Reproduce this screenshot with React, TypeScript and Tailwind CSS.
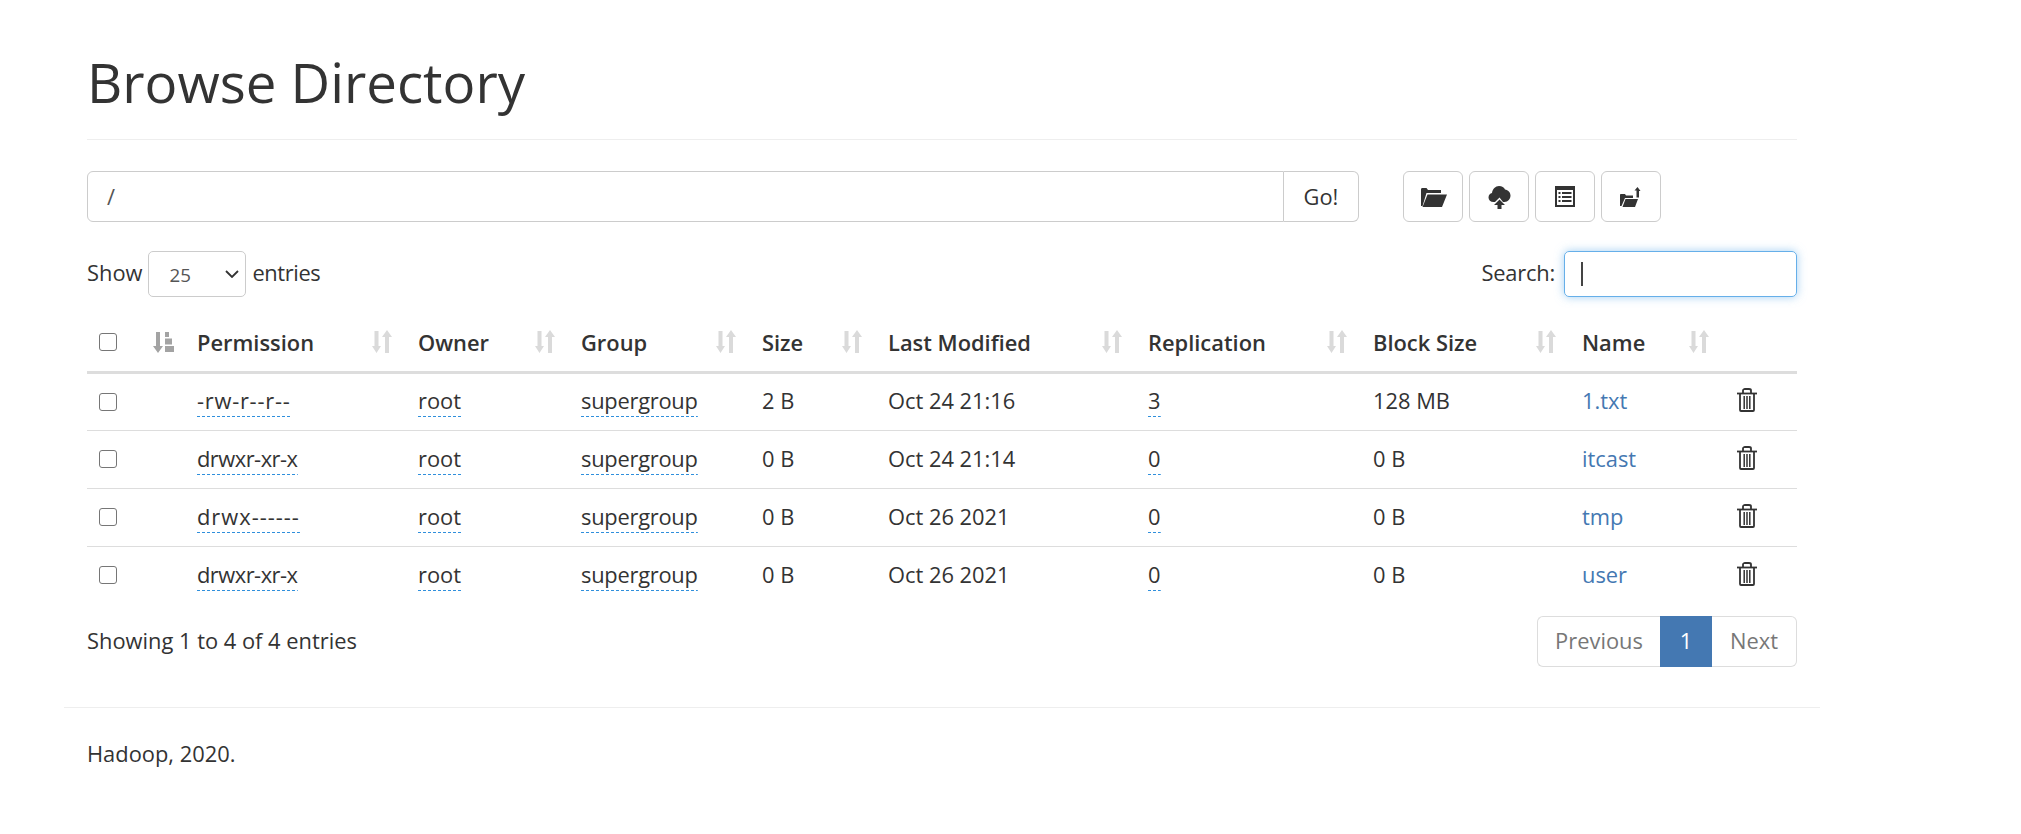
const Sort = () => (
  <svg width="20" height="24" viewBox="0 0 20 24" className="shrink-0 fill-[#dadada]">
    <path d="M2.500 1h4v15H9L4.500 23 0 16h2.500z" />
    <path d="M15 0 20 7h-3v16h-4V7h-3z" />
  </svg>
);

const SortActive = () => (
  <svg width="21" height="21" viewBox="0 0 21 21" className="shrink-0 fill-[#a3a3a3]">
    <path d="M3 0h4v14h3L5 21 0 14h3z" />
    <path d="M12 0h4v5h-4zM12 6.500h7v6h-7zM12 14h9v6h-9z" />
  </svg>
);

const Trash = () => (
  <svg width="20" height="24" viewBox="0 0 20 24" className="fill-none stroke-[#333]" strokeWidth="1.800">
    <path d="M0 5.500h20" />
    <path d="M6 5V2.500C6 1.500 7 1 8 1h4c1 0 2 .5 2 1.500V5" />
    <path d="M3 6v16c0 .6.500 1 1 1h12c.5 0 1-.4 1-1V6" />
    <path d="M7.200 8v13M10 8v13M12.800 8v13" strokeWidth="1.500" />
  </svg>
);

const FolderOpen = () => (
  <svg width="27" height="20" viewBox="0 0 27 20" className="fill-[#333]">
    <path d="M1 2.500C1 1.500 1.500 1 2.500 1h4L8 3h13v3H6.500L2.500 19H1z" />
    <path d="M7.500 7.500H27L22 20H2.500z" />
  </svg>
);

const CloudUpload = () => (
  <svg width="23" height="24" viewBox="0 0 22 24" className="fill-[#333]">
    <path d="M5 17c-3 0-5-2-5-4.500C0 10 1.500 8.500 3.500 8 4 4 7 1 10.500 1c3 0 5 1.500 6 3.500 3 .3 5.500 3 5.500 6 0 3.500-2.500 6.500-6 6.500h-1.500L11 12.500 6.500 17z" />
    <path d="M11 14.500 16.500 20H13v4.500H9V20H5.500z" />
  </svg>
);

const ListAlt = () => (
  <svg width="20" height="21" viewBox="0 0 20 21">
    <rect x="0" y="0" width="20" height="21" className="fill-[#333]" />
    <rect x="2" y="4" width="16" height="15" className="fill-white" />
    <path d="M3.500 6h2v2h-2zM7 6h9.500v2H7zM3.500 10h2v2h-2zM7 10h9.500v2H7zM3.500 14h2v2h-2zM7 14h9.500v2H7z" className="fill-[#333]" />
  </svg>
);

const FolderUp = () => (
  <svg width="22" height="20" viewBox="0 0 22 20" className="fill-[#333]">
    <path d="M0 8c0-.7.500-1 1-1h4l1 1.500h7V11H5L1.500 19H0z" />
    <path d="M5.500 12H18l-3 8H2.500z" />
    <path d="M17.500 0 20.500 4H19v6.500h-2.500V3.500h-2z" />
  </svg>
);

const Dashed = ({ children, className }: { children: string; className?: string }) => (
  <span className={`pb-[2px] bg-[repeating-linear-gradient(90deg,#2f8fdc_0_3px,transparent_3px_5px)] bg-bottom bg-no-repeat bg-[length:100%_1px] ${className ?? ""}`}>{children}</span>
);

const rows = [
  ["-rw-r--r--", "2 B", "Oct 24 21:16", "3", "128 MB", "1.txt", "tracking-[0.75px]"],
  ["drwxr-xr-x", "0 B", "Oct 24 21:14", "0", "0 B", "itcast", "tracking-[-0.5px]"],
  ["drwx------", "0 B", "Oct 26 2021", "0", "0 B", "tmp", "tracking-[1px]"],
  ["drwxr-xr-x", "0 B", "Oct 26 2021", "0", "0 B", "user", "tracking-[-0.5px]"],
];

const heads = ["Permission", "Owner", "Group", "Size", "Last Modified", "Replication", "Block Size", "Name"];

const Check = () => (
  <span className="block w-[18px] h-[18px] rounded-[3px] border-[1.5px] border-[#767676] bg-white" />
);

const IconBtn = ({ children }: { children: React.ReactNode }) => (
  <button className="w-[60px] h-[51px] flex items-center justify-center bg-white border border-[#ccc] rounded-[6px]">
    {children}
  </button>
);

export default function App() {
  return (
    <div className="min-h-[834px] bg-white text-[#333] text-[21.875px] leading-[31px] font-['Open_Sans','Noto_Sans',sans-serif] w-[1756px] ml-[64px]">
      <div className="px-[23px]">
        <div className="pt-[52px] pb-[27px] border-b border-[#eee]">
          <h1 className="text-[54.6px] leading-[60px] font-normal">Browse Directory</h1>
        </div>
        <div className="mt-[31px] flex">
          <div className="w-[1272px] h-[51px] flex">
            <div className="flex-1 border border-[#ccc] rounded-l-[6px] pl-[19px] flex items-center text-[#555]">/</div>
            <div className="w-[75px] border border-l-0 border-[#ccc] rounded-r-[6px] flex items-center justify-center">Go!</div>
          </div>
          <div className="ml-[44px] flex gap-[6px]">
            <IconBtn><FolderOpen /></IconBtn>
            <IconBtn><CloudUpload /></IconBtn>
            <IconBtn><ListAlt /></IconBtn>
            <IconBtn><FolderUp /></IconBtn>
          </div>
        </div>
        <div className="mt-[29px]">
          <div className="flex justify-between items-center h-[46px]">
            <div className="flex items-center">
              <span className="mb-[4px]">Show</span>
              <div className="mx-[6px] w-[98px] h-[46px] border border-[#ccc] rounded-[5px] flex items-center justify-between pl-[20px] pr-[6px] text-[#555] text-[18.75px]">
                <span>25</span>
                <svg width="14" height="8" viewBox="0 0 14 8" className="fill-none stroke-[#333]" strokeWidth="1.800"><path d="M1 1l6 6 6-6" /></svg>
              </div>
              <span className="mb-[4px] tracking-[-0.4px]">entries</span>
            </div>
            <div className="flex items-center">
              <span className="mb-[4px] tracking-[-0.2px]">Search:</span>
              <div className="ml-[9px] w-[233px] h-[46px] border border-[#66afe9] rounded-[5px] shadow-[0_0_10px_rgba(102,175,233,0.6)] flex items-center pl-[16px]">
                <span className="block w-[2px] h-[24px] bg-[#444]" />
              </div>
            </div>
          </div>
          <table className="mt-[17px] w-[1710px] table-fixed border-collapse">
            <colgroup>
              <col className="w-[101px]" />
              <col className="w-[220px]" />
              <col className="w-[163px]" />
              <col className="w-[181px]" />
              <col className="w-[126px]" />
              <col className="w-[260px]" />
              <col className="w-[225px]" />
              <col className="w-[209px]" />
              <col className="w-[153px]" />
              <col className="w-[72px]" />
            </colgroup>
            <thead>
              <tr className="h-[58px] border-b-[3px] border-[#ddd]">
                <th className="p-0">
                  <div className="flex items-center justify-between pl-[12px] pr-[14px]">
                    <Check />
                    <SortActive />
                  </div>
                </th>
                {heads.map((h, i) => (
                  <th key={h} className="p-0 text-left font-semibold">
                    <div className={`flex items-center justify-between pr-[16px] ${i === 0 ? "pl-[9px]" : "pl-[10px]"}`}>
                      <span>{h}</span>
                      <Sort />
                    </div>
                  </th>
                ))}
                <th />
              </tr>
            </thead>
            <tbody>
              {rows.map((r, i) => (
                <tr key={i} className="border-t border-[#ddd] h-[58px]">
                  <td className="p-0 pl-[12px]"><Check /></td>
                  <td className="pl-[9px] pb-[2px]"><Dashed className={r[6]}>{r[0]}</Dashed></td>
                  <td className="pl-[10px] pb-[2px]"><Dashed>root</Dashed></td>
                  <td className="pl-[10px] pb-[2px]"><Dashed className="tracking-[-0.25px]">supergroup</Dashed></td>
                  <td className="pl-[10px] pb-[2px]">{r[1]}</td>
                  <td className="pl-[10px] pb-[2px]">{r[2]}</td>
                  <td className="pl-[10px] pb-[2px]"><Dashed>{r[3]}</Dashed></td>
                  <td className="pl-[10px] pb-[2px]">{r[4]}</td>
                  <td className="pl-[10px] pb-[2px] text-[#4478b2]">{r[5]}</td>
                  <td className="pl-[12px] pb-[3px]"><Trash /></td>
                </tr>
              ))}
            </tbody>
          </table>
          <div className="flex justify-between items-center mt-[12px]">
            <span className="mb-[3px]">Showing 1 to 4 of 4 entries</span>
            <div className="flex h-[51px]">
              <div className="w-[123px] pb-[3px] border border-r-0 border-[#ddd] rounded-l-[6px] flex items-center justify-center text-[#777]">Previous</div>
              <div className="w-[52px] pb-[3px] bg-[#4478b2] text-white flex items-center justify-center">1</div>
              <div className="w-[85px] pb-[3px] border border-l-0 border-[#ddd] rounded-r-[6px] flex items-center justify-center text-[#777]">Next</div>
            </div>
          </div>
        </div>
      </div>
      <div className="mt-[40px] border-t border-[#eee] pt-[30px] pl-[23px]">Hadoop, 2020.</div>
    </div>
  );
}
